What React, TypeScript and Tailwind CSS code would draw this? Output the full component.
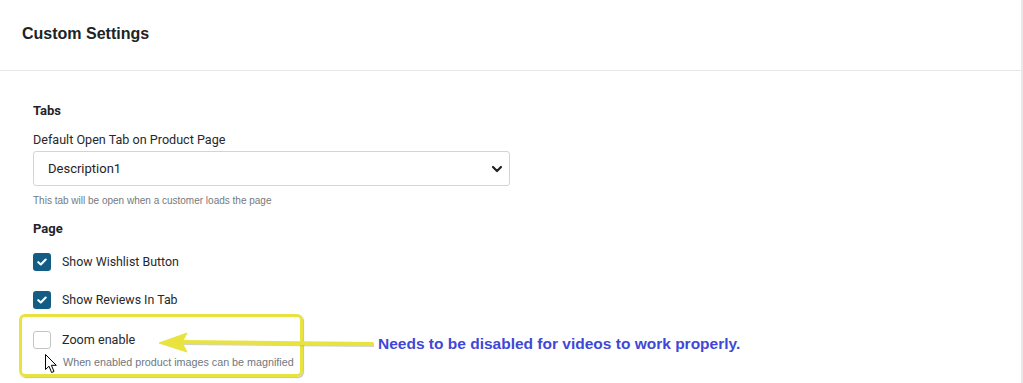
import React from "react";

function Check() {
  return (
    <div className="w-[18px] h-[18px] rounded-[3px] bg-[#135c84] flex items-center justify-center shrink-0">
      <svg width="10" height="8" viewBox="0 0 10 8">
        <path d="M1.3 4.2 L3.8 6.5 L8.7 1.5" fill="none" stroke="#fff" strokeWidth="2.1" strokeLinecap="round" strokeLinejoin="round" />
      </svg>
    </div>
  );
}

export default function App() {
  return (
    <div className="relative w-full h-[383px] bg-white overflow-hidden font-['Roboto','Liberation_Sans',Arial,sans-serif] text-[#1f2328]">
      <div className="absolute right-0 top-0 h-full w-[2px] bg-[#e8e8e8]" />
      <div className="h-[71px] border-b border-[#e6e6e6] mr-[2px] flex items-center px-[22px] pb-[3px]">
        <h1 className="text-[16px] font-bold leading-5 text-[#202326] font-['Liberation_Sans',Arial,sans-serif]">Custom Settings</h1>
      </div>
      <div className="px-[33px]">
        <div className="mt-[32px] text-[13px] font-bold leading-4">Tabs</div>
        <div className="mt-[13px] text-[12.6px] leading-4 text-[#26292d]">Default Open Tab on Product Page</div>
        <div className="mt-[3px] w-[477px] h-[35px] border border-[#d4d4d4] rounded-[3px] flex items-center justify-between pl-[14px] pr-[6px]">
          <span className="text-[13px] text-[#1f2328]">Description1</span>
          <svg width="12" height="8" viewBox="0 0 12 8">
            <path d="M2 2 L6 6 L10 2" fill="none" stroke="#222" strokeWidth="2.2" strokeLinecap="round" strokeLinejoin="round" />
          </svg>
        </div>
        <div className="mt-[8px] text-[10px] leading-[14px] text-[#75797e] font-['Liberation_Sans',Arial,sans-serif]">This tab will be open when a customer loads the page</div>
        <div className="mt-[13px] text-[13px] font-bold leading-4">Page</div>
        <div className="mt-[16px] flex items-center gap-[11px] h-[18px]">
          <Check />
          <span className="text-[12.4px] text-[#26292d]">Show Wishlist Button</span>
        </div>
        <div className="mt-[20px] flex items-center gap-[11px] h-[18px]">
          <Check />
          <span className="text-[12.4px] text-[#26292d]">Show Reviews In Tab</span>
        </div>
        <div className="mt-[22px] flex items-center gap-[11px] h-[18px]">
          <div className="w-[18px] h-[18px] rounded-[3px] border border-[#c4c4c4] bg-white shrink-0" />
          <span className="text-[12.6px] text-[#26292d]">Zoom enable</span>
        </div>
        <div className="mt-[6px] pl-[30px] text-[10.75px] leading-[14px] text-[#6f7780] font-['Liberation_Sans',Arial,sans-serif]">When enabled product images can be magnified</div>
      </div>

      {/* annotation box */}
      <div className="absolute left-[19px] top-[314px] w-[284px] h-[63px] border-[3px] border-[#e9e33f] rounded-[6px] shadow-[1px_1px_1px_rgba(0,0,0,0.25)]" />
      {/* arrow */}
      <svg className="absolute left-[155px] top-[330px]" width="222" height="28" viewBox="0 0 222 28">
        <path d="M28 13 L219 15" stroke="#9a9a9a" strokeWidth="4" opacity="0.45" />
        <path d="M27 12 L218 14" stroke="#e9e33f" strokeWidth="4" />
        <path d="M4 13 L32 3 L27 12.5 L32 22 Z" fill="#e9e33f" stroke="#e9e33f" strokeWidth="1" strokeLinejoin="round" />
      </svg>
      <div className="absolute left-[378px] top-[334px] text-[15.5px] font-bold leading-[20px] text-[#3f48d6] font-['Liberation_Sans',Arial,sans-serif]">
        Needs to be disabled for videos to work properly.
      </div>
      {/* cursor */}
      <svg className="absolute left-[45px] top-[354px]" width="13" height="20" viewBox="0 0 13 20">
        <path d="M0.5 0.5 L0.5 15.5 L4 12.2 L6.6 18.5 L9 17.5 L6.4 11.3 L11.3 11.3 Z" fill="#fff" stroke="#000" strokeWidth="1" strokeLinejoin="round" />
      </svg>
    </div>
  );
}
